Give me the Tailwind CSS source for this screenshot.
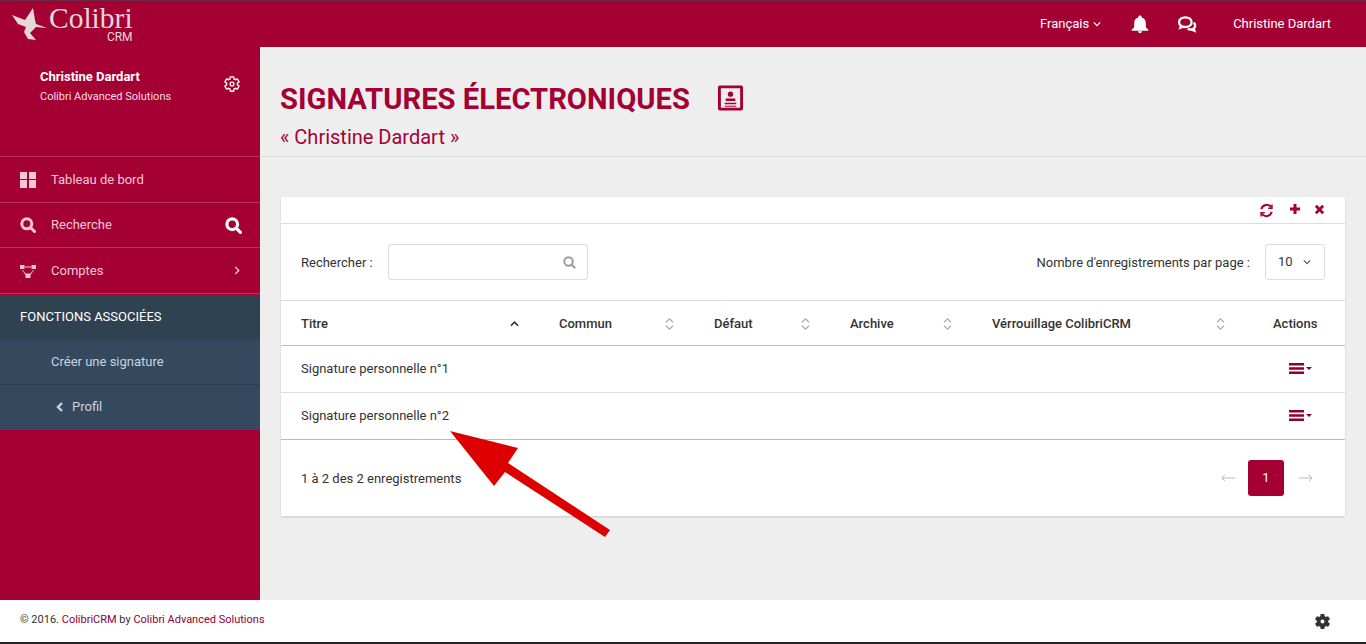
<!DOCTYPE html>
<html lang="fr">
<head>
  <meta charset="UTF-8" />
  <title>Signatures électroniques - ColibriCRM</title>
  <script src="https://cdn.jsdelivr.net/npm/@tailwindcss/browser@4"></script>
</head>
<body class="font-['Roboto',sans-serif] text-[13px] text-[#333] bg-[#eeeeee] antialiased">
  <div class="relative w-[1366px] h-[644px] overflow-hidden flex flex-col">

    <!-- Top bar -->
    <header class="h-[47px] shrink-0 bg-[#a50034] border-t border-t-[#6b2a45] flex items-center text-white">
      <div class="w-[260px] flex items-start pl-[12px] h-[46px]">
        <svg class="w-[36px] h-[36px] mt-[6px]" viewBox="0 0 36 36" fill="#e6d8da"><path d="M0 8 L13 13 L21 1 L23 13 L24 17 L35 21 L24 20 L18 26 L24 33 L16 32 L12 25 L14 20 L6 17 Z"/></svg>
        <div class="ml-[1px] text-[#e6d8da]">
          <div class="font-['Liberation_Serif',serif] text-[29.500px] mt-[3px] leading-[28px]">Colibri</div>
          <div class="text-right text-[12px] leading-[10px]">CRM</div>
        </div>
      </div>
      <div class="flex-1 flex items-center justify-end pr-[35px]">
        <span class="flex items-center gap-[4px]">Français
          <svg class="w-[8px] h-[8px]" viewBox="0 0 10 10" fill="none" stroke="white" stroke-width="1.500"><path d="M1 3l4 4 4-4"/></svg>
        </span>
        <svg class="w-[20px] h-[20px] ml-[29px]" viewBox="0 0 24 24" fill="white"><path d="M12 23c1.400 0 2.400-1 2.400-2.200h-4.800c0 1.200 1 2.200 2.400 2.200zm7-7v-5c0-3.300-1.700-6-5-6.800V3.500c0-1-.9-1.800-2-1.800s-2 .8-2 1.800v.7C6.700 5 5 7.700 5 11v5l-3 3v1h20v-1l-3-3z"/></svg>
        <svg class="w-[20px] h-[20px] ml-[27px]" viewBox="0 0 24 24" fill="none" stroke="white" stroke-width="2.800"><path d="M10 4c-4.400 0-7.500 2.500-7.500 5.800 0 1.700.9 3.200 2.300 4.200l-.8 2.500 3.200-1.300c.9.300 1.800.4 2.800.4 4.400 0 7.500-2.600 7.500-5.800S14.400 4 10 4z"/><path d="M20 10.500c1.200 1 1.800 2.200 1.800 3.500 0 1.300-.6 2.400-1.700 3.300l.7 2.700-3.400-1.500c-1.700.2-3.200 0-4.500-.8"/></svg>
        <span class="ml-[36px]">Christine Dardart</span>
      </div>
    </header>

    <div class="flex flex-1 min-h-0">
      <!-- Sidebar -->
      <aside class="w-[260px] shrink-0 bg-[#a50034] flex flex-col text-[#f5c6d6]">
        <div class="h-[110px] border-b border-[#b8305c] pl-[40px] pr-[20px] pt-[22px] flex justify-between">
          <div>
            <div class="text-white font-bold text-[13px] leading-[15px]">Christine Dardart</div>
            <div class="text-[11px] leading-[15px] mt-[5px] text-[#f9dbe5]">Colibri Advanced Solutions</div>
          </div>
          <svg class="w-[18px] h-[18px] mt-[6px] mr-[-1px]" viewBox="0 0 24 24" fill="none" stroke="white" stroke-width="1.800"><path d="M19.140 12.940c.04-.3.06-.61.06-.94 0-.32-.02-.64-.07-.94l2.030-1.580c.18-.14.23-.41.12-.61l-1.920-3.320c-.12-.22-.37-.29-.59-.22l-2.390.96c-.5-.38-1.030-.7-1.620-.94l-.36-2.540c-.04-.24-.24-.41-.48-.41h-3.840c-.24 0-.43.17-.47.41l-.36 2.540c-.59.24-1.130.57-1.620.94l-2.390-.96c-.22-.08-.47 0-.59.22L2.740 8.870c-.12.21-.08.47.12.61l2.030 1.580c-.05.3-.09.63-.09.94s.02.64.07.94l-2.030 1.580c-.18.14-.23.41-.12.61l1.920 3.320c.12.22.37.29.59.22l2.390-.96c.5.38 1.030.7 1.620.94l.36 2.540c.05.24.24.41.48.41h3.840c.24 0 .44-.17.47-.41l.36-2.540c.59-.24 1.130-.56 1.620-.94l2.390.96c.22.08.47 0 .59-.22l1.920-3.320c.12-.22.07-.47-.12-.61l-2.010-1.580z"/><circle cx="12" cy="12" r="2.500"/></svg>
        </div>
        <nav class="flex flex-col">
          <a class="h-[46px] border-b border-[#b8305c] flex items-center pl-[20px]">
            <span class="w-[16px] h-[16px] grid grid-cols-2 gap-[1.500px] mr-[15px]">
              <i class="bg-[#f5c6d6]"></i><i class="bg-[#f5c6d6]"></i><i class="bg-[#f5c6d6]"></i><i class="bg-[#f5c6d6]"></i>
            </span>Tableau de bord
          </a>
          <a class="h-[45px] border-b border-[#b8305c] flex items-center pl-[20px] pr-[17px]">
            <svg class="w-[16px] h-[16px] mr-[15px]" viewBox="0 0 16 16" fill="none" stroke="#f5c6d6" stroke-width="3"><circle cx="6.800" cy="6.800" r="5"/><path d="M10.500 10.500l4 4" stroke-linecap="round"/></svg>
            Recherche
            <svg class="w-[17px] h-[17px] ml-auto mr-[1px]" viewBox="0 0 16 16" fill="none" stroke="white" stroke-width="3"><circle cx="6.800" cy="6.800" r="5"/><path d="M10.500 10.500l4 4" stroke-linecap="round"/></svg>
          </a>
          <a class="h-[46px] border-b border-[#b8305c] flex items-center pl-[20px] pr-[20px]">
            <svg class="w-[16px] h-[14px] mr-[15px]" viewBox="0 0 16 14" fill="#f5c6d6"><rect x="0" y="1" width="4.500" height="4"/><rect x="11.500" y="1" width="4.500" height="4"/><rect x="5.500" y="9.500" width="5" height="4.500"/><path d="M5 2.500h6v1H5zM2 6l3.500 5 .8-.6-3.500-4.400zM14 6l-3.500 5-.8-.6 3.500-4.400z"/></svg>
            Comptes
            <svg class="w-[6px] h-[9px] ml-auto" viewBox="0 0 6 10" fill="none" stroke="#f5c6d6" stroke-width="1.500"><path d="M1 1l4 4-4 4"/></svg>
          </a>
        </nav>
        <div class="mt-[1px]">
          <div class="h-[45px] bg-[#2f4252] flex items-center pb-[2px] pl-[20px] text-white">FONCTIONS ASSOCIÉES</div>
          <div class="h-[45px] bg-[#35495e] border-b border-[#2b3c4c] flex items-center pl-[51px] text-[#c9d3de]">Créer une signature</div>
          <div class="h-[45px] bg-[#35495e] flex items-center pb-[1px] pl-[56px] text-[#c9d3de]">
            <svg class="w-[7px] h-[10px] mr-[9px]" viewBox="0 0 7 10" fill="none" stroke="#c9d3de" stroke-width="2.400"><path d="M6 1L2 5l4 4"/></svg>
            Profil
          </div>
        </div>
      </aside>

      <!-- Main -->
      <main class="flex-1 min-w-0">
        <div class="h-[110px] border-b border-[#dddddd] pl-[20px] pt-[34px] text-[#a50034]">
          <div class="flex items-center h-[36px]">
            <h1 class="font-bold text-[29.200px] leading-[36px]">SIGNATURES ÉLECTRONIQUES</h1>
            <svg class="w-[27px] h-[28px] ml-[27px] -mt-[3px]" viewBox="0 0 28 28" fill="#a50034"><path fill-rule="evenodd" d="M3 1h22a2 2 0 012 2v22a2 2 0 01-2 2H3a2 2 0 01-2-2V3a2 2 0 012-2zm1 3v20h20V4z"/><circle cx="14" cy="10" r="2.800"/><path d="M9 14.500h10v2.500H9zM8 19h12v1.500H8zM8 22h12v1H8z"/></svg>
          </div>
          <p class="text-[20px] leading-[24px] mt-[8px]">« Christine Dardart »</p>
        </div>

        <section class="mt-[40px] ml-[21px] w-[1064px] h-[319px] bg-white shadow-[0_1px_2px_rgba(0,0,0,0.15)]">
          <div class="h-[27px] border-b border-[#dddddd] flex items-center justify-end pr-[20px] gap-[13px]">
            <svg class="w-[15px] h-[15px] mr-[2px]" viewBox="0 0 16 16" fill="none" stroke="#a50034" stroke-width="2.200"><path d="M2.500 6.500A5.800 5.800 0 0113 4.500M13.500 9.500A5.800 5.800 0 013 11.500"/><path d="M13.800 1.500v4h-4M2.200 14.500v-4h4" stroke-width="1.600"/></svg>
            <svg class="w-[12px] h-[12px] -mt-[3px]" viewBox="0 0 12 12" fill="#a50034"><path d="M4.500 1h3v3.500H11v3H7.500V11h-3V7.500H1v-3h3.500z"/></svg>
            <svg class="w-[11px] h-[11px] -mt-[1px]" viewBox="0 0 12 12" fill="none" stroke="#a50034" stroke-width="3"><path d="M2 2l8 8M10 2l-8 8"/></svg>
          </div>

          <div class="h-[77px] flex items-center justify-between pl-[20px] pr-[20px] border-b border-[#dddddd]">
            <div class="flex items-center">
              <span class="mt-[1px]">Rechercher :</span>
              <div class="ml-[15px] w-[200px] h-[36px] border border-[#dddddd] rounded-[3px] flex items-center justify-end pr-[11px]">
                <svg class="w-[13px] h-[13px]" viewBox="0 0 16 16" fill="none" stroke="#999" stroke-width="2.400"><circle cx="6.800" cy="6.800" r="5.200"/><path d="M10.500 10.500l4.500 4.500"/></svg>
              </div>
            </div>
            <div class="flex items-center">
              <span class="mt-[1px]">Nombre d'enregistrements par page :</span>
              <div class="ml-[15px] w-[60px] h-[36px] border border-[#dddddd] rounded-[3px] flex items-center pl-[12px]">10
                <svg class="w-[8px] h-[8px] ml-[10px]" viewBox="0 0 10 10" fill="none" stroke="#555" stroke-width="1.500"><path d="M1 3l4 4 4-4"/></svg>
              </div>
            </div>
          </div>

          <table class="w-[1064px] table-fixed border-collapse">
            <thead>
              <tr class="h-[44px] border-b border-[#bbbbbb] text-left">
                <th class="w-[258px] pl-[20px] pr-[20px] pt-[2px] font-medium"><div class="flex items-center justify-between">Titre
                  <svg class="w-[9px] h-[6px]" viewBox="0 0 10 6" fill="none" stroke="#333" stroke-width="1.800"><path d="M1 5l4-4 4 4"/></svg></div></th>
                <th class="w-[155px] pl-[20px] pr-[20px] pt-[2px] font-medium"><div class="flex items-center justify-between">Commun
                  <svg class="w-[9px] h-[14px]" viewBox="0 0 10 16" fill="none" stroke="#aaa" stroke-width="1.400"><path d="M1 6l4-4 4 4M1 10l4 4 4-4"/></svg></div></th>
                <th class="w-[136px] pl-[20px] pr-[20px] pt-[2px] font-medium"><div class="flex items-center justify-between">Défaut
                  <svg class="w-[9px] h-[14px]" viewBox="0 0 10 16" fill="none" stroke="#aaa" stroke-width="1.400"><path d="M1 6l4-4 4 4M1 10l4 4 4-4"/></svg></div></th>
                <th class="w-[142px] pl-[20px] pr-[20px] pt-[2px] font-medium"><div class="flex items-center justify-between">Archive
                  <svg class="w-[9px] h-[14px]" viewBox="0 0 10 16" fill="none" stroke="#aaa" stroke-width="1.400"><path d="M1 6l4-4 4 4M1 10l4 4 4-4"/></svg></div></th>
                <th class="w-[273px] pl-[20px] pr-[20px] pt-[2px] font-medium"><div class="flex items-center justify-between">Vérrouillage ColibriCRM
                  <svg class="w-[9px] h-[14px]" viewBox="0 0 10 16" fill="none" stroke="#aaa" stroke-width="1.400"><path d="M1 6l4-4 4 4M1 10l4 4 4-4"/></svg></div></th>
                <th class="w-[100px] pl-[28px] pt-[2px] font-medium">Actions</th>
              </tr>
            </thead>
            <tbody>
              <tr class="h-[47px] border-b border-[#dddddd]">
                <td class="pl-[20px]" colspan="5">Signature personnelle n°1</td>
                <td class="pl-[44px]"><svg class="w-[23px] h-[11px]" viewBox="0 0 23 11" fill="#8f0030"><path d="M0 0h15v2.400H0zM0 4.300h15v2.400H0zM0 8.600h15V11H0zM17 4h6l-3 3z"/></svg></td>
              </tr>
              <tr class="h-[47px] border-b border-[#bbbbbb]">
                <td class="pl-[20px]" colspan="5">Signature personnelle n°2</td>
                <td class="pl-[44px]"><svg class="w-[23px] h-[11px]" viewBox="0 0 23 11" fill="#8f0030"><path d="M0 0h15v2.400H0zM0 4.300h15v2.400H0zM0 8.600h15V11H0zM17 4h6l-3 3z"/></svg></td>
              </tr>
            </tbody>
          </table>

          <div class="h-[77px] flex items-center justify-between pl-[20px] pr-[32px]">
            <span class="mt-[1px]">1 à 2 des 2 enregistrements</span>
            <div class="flex items-center">
              <svg class="w-[14px] h-[8px]" viewBox="0 0 14 8" fill="none" stroke="#bbb"><path d="M14 4H1M4 1L1 4l3 3"/></svg>
              <span class="w-[36px] h-[36px] ml-[13px] mr-[15px] rounded-[3px] bg-[#a50034] text-white flex items-center justify-center">1</span>
              <svg class="w-[14px] h-[8px]" viewBox="0 0 14 8" fill="none" stroke="#bbb"><path d="M0 4h13M10 1l3 3-3 3"/></svg>
            </div>
          </div>
        </section>
      </main>
    </div>

    <!-- Footer -->
    <footer class="h-[42px] shrink-0 bg-white flex items-center justify-between pl-[20px] pr-[34px] text-[11px] mb-[2px]">
      <span class="-mt-[2px]">© 2016. <span class="text-[#8f0030]">ColibriCRM</span> by <span class="text-[#8f0030]">Colibri Advanced Solutions</span></span>
      <svg class="w-[19px] h-[19px]" viewBox="0 0 24 24" fill="#333"><path fill-rule="evenodd" d="M19.140 12.940c.04-.3.06-.61.06-.94 0-.32-.02-.64-.07-.94l2.030-1.580c.18-.14.23-.41.12-.61l-1.920-3.320c-.12-.22-.37-.29-.59-.22l-2.390.96c-.5-.38-1.030-.7-1.620-.94l-.36-2.540c-.04-.24-.24-.41-.48-.41h-3.840c-.24 0-.43.17-.47.41l-.36 2.540c-.59.24-1.130.57-1.620.94l-2.390-.96c-.22-.08-.47 0-.59.22L2.740 8.870c-.12.21-.08.47.12.61l2.030 1.580c-.05.3-.09.63-.09.94s.02.64.07.94l-2.030 1.580c-.18.14-.23.41-.12.61l1.920 3.320c.12.22.37.29.59.22l2.390-.96c.5.38 1.030.7 1.620.94l.36 2.540c.05.24.24.41.48.41h3.840c.24 0 .44-.17.47-.41l.36-2.540c.59-.24 1.130-.56 1.620-.94l2.390.96c.22.08.47 0 .59-.22l1.920-3.320c.12-.22.07-.47-.12-.61l-2.010-1.580zM12 14.500a2.500 2.500 0 100-5 2.500 2.500 0 000 5z"/></svg>
    </footer>
    <div class="absolute left-0 right-0 bottom-0 h-[2px] bg-[#222]"></div>

    <!-- Red annotation arrow over the table -->
    <svg class="absolute left-0 top-0 pointer-events-none" width="1366" height="644" viewBox="0 0 1366 644" fill="#dd0000"><polygon points="450,431 518,448 508,463 610,530 605,537 505,472 494,486"/></svg>
  </div>
</body>
</html>
